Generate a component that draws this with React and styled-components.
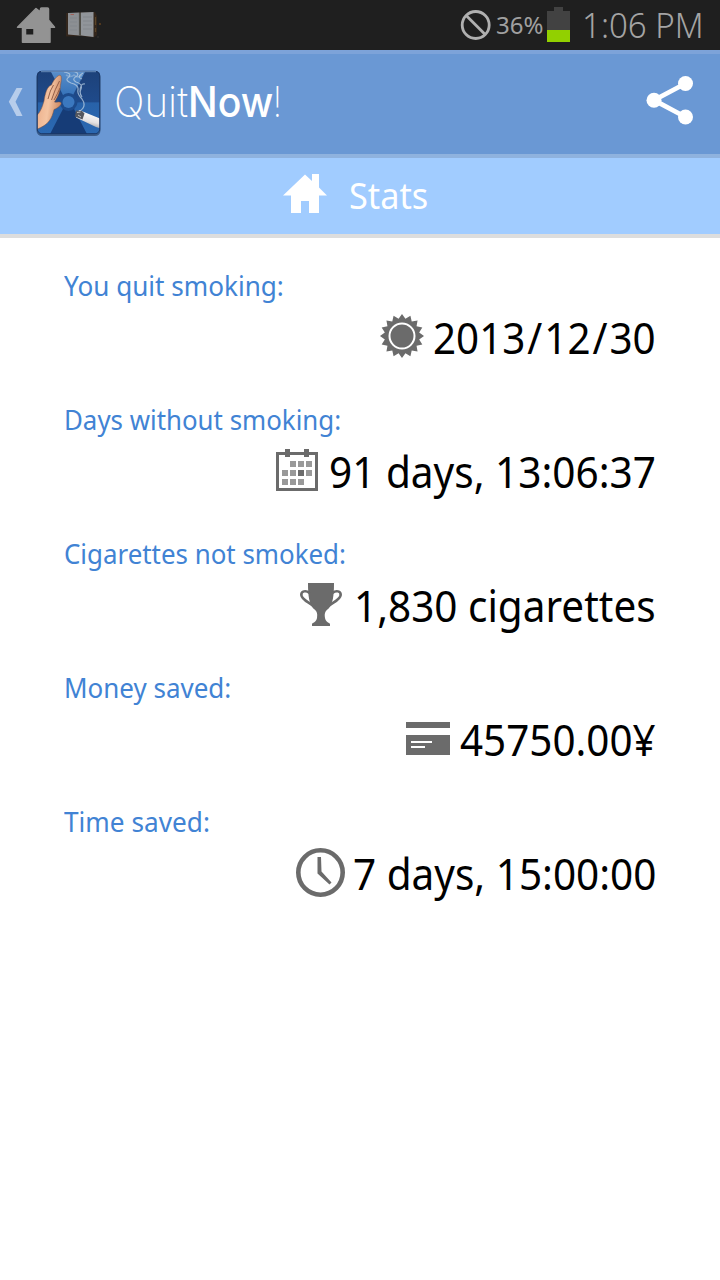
import React, { useLayoutEffect, useRef } from 'react';
import styled, { createGlobalStyle } from 'styled-components';

const Global = createGlobalStyle`
  * { box-sizing: border-box; }
  html, body { margin: 0; padding: 0; background: #fff; }
  body { font-family: "Noto Sans", "Open Sans", sans-serif; }
  svg { display: block; flex: none; }
`;

const Screen = styled.div`
  width: 720px;
  height: 1280px;
  display: flex;
  flex-direction: column;
  background: #fff;
  overflow: hidden;
`;

const FitBox = styled.div`
  width: ${(p) => p.$w}px;
  flex: none;
  font-size: ${(p) => p.$size}px;
  line-height: ${(p) => p.$line}px;
  height: ${(p) => p.$line}px;
  color: ${(p) => p.$color};
  font-weight: ${(p) => p.$weight || 400};
  font-family: ${(p) => p.$font || 'inherit'};
  margin-top: ${(p) => p.$shift || 0}px;
  white-space: nowrap;
`;

const FitSpan = styled.span`
  display: inline-block;
  transform-origin: 0 50%;
`;

/* Condenses a line of text horizontally so that it fills its box. */
function FitText({ children, ...box }) {
  const ref = useRef(null);
  useLayoutEffect(() => {
    const el = ref.current;
    const fit = () => {
      el.style.transform = `scaleX(${box.$w / el.offsetWidth})`;
    };
    fit();
    document.fonts.ready.then(fit);
  }, [box.$w]);
  return (
    <FitBox {...box}>
      <FitSpan ref={ref}>{children}</FitSpan>
    </FitBox>
  );
}

const Slash = styled.span`
  margin: 0 0.05em;
`;

const StatusBar = styled.header`
  height: 50px;
  flex: none;
  background: #1f1f1f;
  display: flex;
  align-items: center;
  justify-content: space-between;
  padding: 0 16px 0 16px;
`;

const StatusGroup = styled.div`
  display: flex;
  align-items: center;
  height: 50px;
  gap: ${(p) => p.$gap || 0}px;
`;

const Battery = styled.div`
  display: flex;
  flex-direction: column;
  align-items: center;
  margin: 0 12px 1px 4px;
`;
const BatteryCap = styled.div`
  width: 9px;
  height: 4px;
  background: #424242;
`;
const BatteryBody = styled.div`
  width: 23px;
  height: 31px;
  background: linear-gradient(#424242 19px, #92d000 19px);
`;

const AppBar = styled.div`
  height: 108px;
  flex: none;
  background: #6a98d4;
  border-top: 4px solid #7da3d9;
  border-bottom: 4px solid #8fb2de;
  display: flex;
  align-items: center;
  padding: 0 26px 4px 8px;
`;

const Title = styled.h1`
  margin: 0 auto 0 12px;
  display: flex;
  align-items: center;
`;

const TabBar = styled.div`
  height: 80px;
  flex: none;
  background: #a1ccff;
  border-bottom: 4px solid #ddd;
  display: flex;
  align-items: center;
  padding: 0 0 5px 283px;
  gap: 22px;
`;

const StatList = styled.main`
  padding: 28px 64px 0 64px;
  display: flex;
  flex-direction: column;
  gap: 34px;
`;

const Stat = styled.section`
  display: flex;
  flex-direction: column;
  gap: 2px;
`;

const StatValue = styled.div`
  height: 60px;
  display: flex;
  align-items: center;
  justify-content: flex-end;
  gap: ${(p) => p.$gap}px;
`;

const GREY = '#6b6b6b';

const StatusHouse = () => (
  <svg width="40" height="37" viewBox="0 0 40 37">
    <path fill="#939393" stroke="#939393" strokeWidth="1.5" strokeLinejoin="round" fillRule="evenodd"
      d="M20 1.5 L24.5 5 V2 Q24.5 1 25.5 1 H31.5 Q32.500 1 32.500 2 V13 L38.500 20.300 H34 V35.300 H6.500 V20.300 H1.500 Z M9.500 21.300 V28.300 H18 V21.300 Z" />
  </svg>
);

const NotebookIcon = () => (
  <svg width="36" height="28" viewBox="0 0 36 28">
    <path d="M0 2 L29 1 L31 5 V24 L28 26.500 L15 25 L0 25.500 Z" fill="#33261c" />
    <path d="M2 2 L13 1.500 V24.500 L2 23.500 Z" fill="#8c8f93" />
    <path d="M15 1.500 L27.500 1 V26 L15 24.500 Z" fill="#91959a" />
    <path d="M13.900 1.500 V25" stroke="#55544f" strokeWidth="2" />
    <path d="M4 7 H11 M4 11 H11 M4 15 H11 M4 19 H11 M17 6 H26 M17 10 H26 M17 14 H26 M17 18 H26" stroke="#83878c" strokeWidth="1" />
    <path d="M4.500 3.500 H8" stroke="#a0625a" strokeWidth="1" />
    <path d="M29.500 6 V14 M29.500 17 V21" stroke="#5b4528" strokeWidth="1.200" />
    <circle cx="34" cy="13" r="1.100" fill="#5d3f20" />
    <circle cx="32" cy="26" r="0.800" fill="#3c3833" />
  </svg>
);

const BlockedIcon = () => (
  <svg width="32" height="32" viewBox="0 0 32 32" fill="none" stroke="#b0b0b0" strokeWidth="2.800">
    <circle cx="15.700" cy="16" r="13.500" />
    <path d="M6.200 6.500 L25.200 25.500" />
  </svg>
);

const BlockedSlot = styled.div`
  margin-right: 4px;
`;

const BackIcon = () => (
  <svg width="15" height="30" viewBox="0 0 15 30">
    <path d="M8.500 1 H14.500 L7.500 14.800 L14.500 29 H8.500 L0.800 14.800 Z" fill="#b7cdeb" />
  </svg>
);

const LogoSlot = styled.div`
  margin: 4px 0 0 12.500px;
`;

const AppLogo = () => (
  <svg width="66" height="68" viewBox="0 0 66 68">
    <defs>
      <linearGradient id="bg" x1="0" y1="0" x2="0" y2="1">
        <stop offset="0" stopColor="#1d4179" />
        <stop offset="0.480" stopColor="#1f4a8a" />
        <stop offset="0.500" stopColor="#2862a9" />
        <stop offset="1" stopColor="#2b69b2" />
      </linearGradient>
      <linearGradient id="ray" x1="0" y1="0" x2="0" y2="1">
        <stop offset="0" stopColor="#5b8fca" />
        <stop offset="1" stopColor="#3471b8" />
      </linearGradient>
      <linearGradient id="skin" x1="0" y1="0" x2="1" y2="0.300">
        <stop offset="0" stopColor="#e9a883" />
        <stop offset="0.600" stopColor="#f4c4a2" />
        <stop offset="1" stopColor="#d08e68" />
      </linearGradient>
      <linearGradient id="cig" x1="0.300" y1="0" x2="0" y2="1">
        <stop offset="0" stopColor="#fff" />
        <stop offset="0.500" stopColor="#e4e2e2" />
        <stop offset="1" stopColor="#77777b" />
      </linearGradient>
      <clipPath id="clip"><rect x="1" y="1" width="63" height="63" rx="4.500" /></clipPath>
    </defs>
    <rect x="0.500" y="1.500" width="64" height="64.500" rx="5.500" fill="#274267" opacity="0.700" />
    <g clipPath="url(#clip)">
      <rect x="0" y="0" width="66" height="66" fill="url(#bg)" />
      <path d="M14 0 H50 L36 27 H28 Z" fill="url(#ray)" />
      <path d="M28 37 H37 L52 66 H13 Z" fill="#163c77" />
      <circle cx="32.500" cy="32" r="9" fill="#1d4b8c" />
      <circle cx="32.500" cy="32" r="6" fill="#3b78bf" />
      <path d="M0 46 C4 43 6 38 8 31 C9 24 11 16 15.500 15 C17 11 22 4 24.500 5.500 C26.500 7.500 24.500 13 24.300 17 C24.500 20 22 27 18.500 32 C20 33 22 31 25 32.500 C26 35 22 38 18 39.500 C16 48 13 55 0 59.500 Z" fill="url(#skin)" stroke="#7f513f" strokeWidth="0.500" />
      <path d="M12 29 Q14 20 17.500 15 M15.500 30 Q19 19 23.500 11 M18 30 Q22 23 24 18" fill="none" stroke="#8a5540" strokeWidth="0.900" />
      <path d="M28 2 Q36 3 33 7 Q28 10 35 13 Q43 15 42 20 Q41 24 46 29 Q51 36 44 41 M35 1 Q44 2 41 6 Q35 9 40 12 Q47 14 45 19 Q43 23 46 27 M47 3 Q40 7 46 9 M44 22 Q44 13 49 14" fill="none" stroke="#b8cde1" strokeWidth="1.200" opacity="0.750" />
      <path d="M30 5 Q35 8 38 5 Q42 9 46 5" fill="none" stroke="#b8cde1" strokeWidth="1.500" opacity="0.400" />
      <path d="M43 40 L65 49 V58.500 L60 57 L40 47.500 Z" fill="url(#cig)" />
      <path d="M40 40.500 L46 41 L48.500 43.500 L46.500 49.500 L39 46.500 Z" fill="#55585f" />
      <path d="M41 42.500 L44.500 42 M42 45 L45 47" stroke="#c0c1c3" strokeWidth="1" />
    </g>
    <rect x="1.300" y="1.300" width="62.400" height="62.400" rx="4.500" fill="none" stroke="#1b3765" strokeWidth="1" />
    <path d="M5 1.700 H60" stroke="#7ba2d1" strokeWidth="0.800" />
  </svg>
);

const ShareIcon = () => (
  <svg width="48" height="54" viewBox="0 0 48 54" fill="#fff">
    <path d="M39.500 8.500 L8 25.200 L39.500 42" fill="none" stroke="#fff" strokeWidth="4.800" />
    <circle cx="8" cy="25.200" r="7.500" />
    <circle cx="39.500" cy="8.500" r="7.500" />
    <circle cx="39.500" cy="42" r="7.500" />
  </svg>
);

const HouseIcon = () => (
  <svg width="44" height="40" viewBox="0 0 44 40">
    <path fill="#fff" d="M22 0.500 L29 7 V0 H36 V13.500 L44 21.500 H36 V39 H26 V27 H18 V39 H8 V21.500 H0 Z" />
  </svg>
);

const sunPoints = Array.from({ length: 32 }, (_, i) => {
  const r = i % 2 ? 17.500 : 22;
  const a = (i * Math.PI) / 16 - Math.PI / 2;
  return `${22 + r * Math.cos(a)},${22 + r * Math.sin(a)}`;
}).join(' ');

const SunIcon = () => (
  <svg width="44" height="44" viewBox="0 0 44 44">
    <polygon points={sunPoints} fill={GREY} />
    <circle cx="22" cy="22" r="12.500" fill={GREY} stroke="#fff" strokeWidth="2" />
  </svg>
);

const calendarCells = [
  [14, 12], [22, 12], [30, 12],
  [6, 21], [14, 21], [22, 21], [30, 21],
  [6, 30], [14, 30], [22, 30],
];

const CalendarIcon = () => (
  <svg width="42" height="42" viewBox="0 0 42 42">
    <rect x="1.500" y="4.500" width="39" height="36" fill="none" stroke={GREY} strokeWidth="3" />
    <rect x="9" y="0" width="5" height="8" fill={GREY} />
    <rect x="28" y="0" width="5" height="8" fill={GREY} />
    {calendarCells.map(([x, y]) => (
      <rect key={`${x}-${y}`} x={x} y={y} width="6" height="6" fill={x === 22 && y === 21 ? GREY : '#999'} />
    ))}
  </svg>
);

const TrophyIcon = () => (
  <svg width="42" height="43" viewBox="0 0 42 43">
    <path fill={GREY} d="M8 0 H34 C34 13 33 21 28 26 C24.500 29 24.500 31 25 35 C25.500 39 30 40 30 41 V43 H12 V41 C12 40 16.500 39 17 35 C17.500 31 17.500 29 14 26 C9 21 8 13 8 0 Z" />
    <path fill="none" stroke={GREY} strokeWidth="2.500" d="M9.500 10 C6 7 1 8 1.300 12 C2 18 12 20 15 25 M32.500 10 C36 7 41 8 40.700 12 C40 18 30 20 27 25" />
  </svg>
);

const CardIcon = () => (
  <svg width="44" height="33" viewBox="0 0 44 33">
    <rect width="44" height="6" fill={GREY} />
    <rect y="13" width="44" height="20" fill={GREY} />
    <rect x="5" y="19" width="21" height="2" fill="#fff" />
    <rect x="5" y="24" width="14" height="2" fill="#fff" />
  </svg>
);

const ClockIcon = () => (
  <svg width="49" height="49" viewBox="0 0 49 49">
    <circle cx="24.500" cy="24.500" r="22.200" fill="none" stroke={GREY} strokeWidth="4.600" />
    <path fill={GREY} d="M21.500 9 H25 L25.500 23.500 L35.500 34.500 L33.500 36.500 L21.500 25.500 Z" />
  </svg>
);

const stats = [
  { label: 'You quit smoking:', lw: 220, value: <>2013<Slash>/</Slash>12<Slash>/</Slash>30</>, w: 223, gap: 9, Icon: SunIcon },
  { label: 'Days without smoking:', lw: 277, value: '91 days, 13:06:37', w: 327, gap: 11, Icon: CalendarIcon },
  { label: 'Cigarettes not smoked:', lw: 282, value: '1,830 cigarettes', w: 302, gap: 12, Icon: TrophyIcon },
  { label: 'Money saved:', lw: 167, value: '45750.00¥', w: 196, gap: 10, Icon: CardIcon },
  { label: 'Time saved:', lw: 146, value: '7 days, 15:00:00', w: 303, gap: 8, Icon: ClockIcon },
];

export default function App() {
  return (
    <Screen>
      <Global />
      <StatusBar>
        <StatusGroup $gap={10}>
          <StatusHouse />
          <NotebookIcon />
        </StatusGroup>
        <StatusGroup>
          <BlockedSlot><BlockedIcon /></BlockedSlot>
          <FitText $w={47} $size={23.5} $line={34} $color="#a0a0a0" $shift={0}>36%</FitText>
          <Battery>
            <BatteryCap />
            <BatteryBody />
          </Battery>
          <FitText $w={122} $size={35.5} $line={48} $color="#a4a4a4" $weight={300} $shift={-3}>1:06 PM</FitText>
        </StatusGroup>
      </StatusBar>
      <AppBar>
        <BackIcon />
        <LogoSlot><AppLogo /></LogoSlot>
        <Title>
          <FitText $w={74} $size={42} $line={50} $color="#fff" $weight={200} $font="Inter, sans-serif">Quit</FitText>
          <FitText $w={85} $size={42} $line={50} $color="#fff" $weight={500} $font="Inter, sans-serif">Now</FitText>
          <FitText $w={9} $size={42} $line={50} $color="#fff" $weight={200} $font="Inter, sans-serif">!</FitText>
        </Title>
        <ShareIcon />
      </AppBar>
      <TabBar>
        <HouseIcon />
        <FitText $w={79} $size={36} $line={50} $color="#fff" $shift={4}>Stats</FitText>
      </TabBar>
      <StatList>
        {stats.map(({ label, lw, value, w, gap, Icon }) => (
          <Stat key={label}>
            <FitText $w={lw} $size={28} $line={38} $color="#4183d4">{label}</FitText>
            <StatValue $gap={gap}>
              <Icon />
              <FitText $w={w} $size={44.5} $line={60} $color="#000" $shift={1}>{value}</FitText>
            </StatValue>
          </Stat>
        ))}
      </StatList>
    </Screen>
  );
}
